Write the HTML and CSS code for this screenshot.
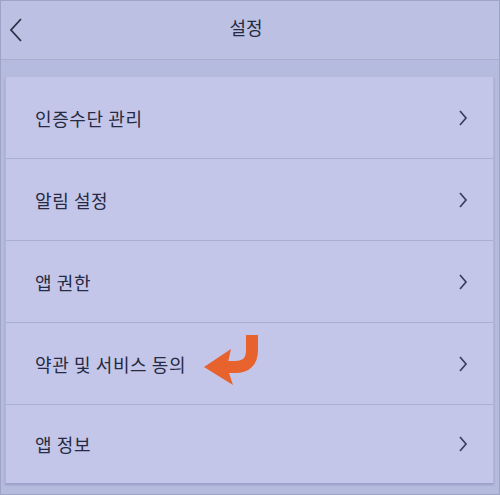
FILE: index.html
```html
<!DOCTYPE html>
<html>
<head>
<meta name='viewport' content='width=device-width,initial-scale=1.0'/>
<title>설정</title>
<link rel="stylesheet" href="styles.css">
</head>
<body>

<section class="screen">

    <header class="topbar">
        <svg class="back" width="14" height="26" viewBox="0 0 14 26">
            <path d="M12 2 L2 13 L12 24" fill="none" stroke="#2c3048" stroke-width="1.8"/>
        </svg>
        <h1 class="title">설정</h1>
    </header>

    <div class="band">
        <nav class="card">
            <div class="row">
                <span class="label">인증수단 관리</span>
                <svg class="chev" width="10" height="18" viewBox="0 0 10 18"><path d="M2 2 L8 9 L2 16" fill="none" stroke="#3a3e5c" stroke-width="1.7"/></svg>
            </div>
            <div class="row">
                <span class="label">알림 설정</span>
                <svg class="chev" width="10" height="18" viewBox="0 0 10 18"><path d="M2 2 L8 9 L2 16" fill="none" stroke="#3a3e5c" stroke-width="1.7"/></svg>
            </div>
            <div class="row">
                <span class="label">앱 권한</span>
                <svg class="chev" width="10" height="18" viewBox="0 0 10 18"><path d="M2 2 L8 9 L2 16" fill="none" stroke="#3a3e5c" stroke-width="1.7"/></svg>
            </div>
            <div class="row">
                <span class="label">약관 및 서비스 동의</span>
                <svg class="pointer" width="60" height="52" viewBox="0 0 60 52">
                    <path d="M50 2 L50 17 Q50 34 33 34 L22 34" fill="none" stroke="#e8622e" stroke-width="12"/>
                    <polygon points="2,34 29,16 25,34 31,52" fill="#e8622e"/>
                </svg>
                <svg class="chev" width="10" height="18" viewBox="0 0 10 18"><path d="M2 2 L8 9 L2 16" fill="none" stroke="#3a3e5c" stroke-width="1.7"/></svg>
            </div>
            <div class="row last">
                <span class="label">앱 정보</span>
                <svg class="chev" width="10" height="18" viewBox="0 0 10 18"><path d="M2 2 L8 9 L2 16" fill="none" stroke="#3a3e5c" stroke-width="1.7"/></svg>
            </div>
        </nav>
    </div>

</section>

</body>
</html>
```

FILE: styles.css
```css
* {
    box-sizing: border-box;
}

html, body {
    margin: 0;
    padding: 0;
}

body {
    font-family: "Noto Sans CJK KR", "Noto Sans", sans-serif;
    background: #b3b9dc;
    color: #262a42;
}

/* whole phone capture, thin frame round it */
.screen {
    width: 500px;
    height: 495px;
    border: 1px solid #9ea4c6;
    background: #b5bbde;
    display: flex;
    flex-direction: column;
    overflow: hidden;
}

.topbar {
    height: 59px;
    flex-shrink: 0;
    display: flex;
    align-items: center;
    justify-content: center;
    position: relative;
    background: #bcc1e4;
    border-bottom: 1px solid #a8aed0;
}

.back {
    position: absolute;
    left: 8px;
    top: 16px;
}

.title {
    margin: 0;
    font-size: 18px;
    font-weight: 400;
    line-height: 24px;
    margin-top: -6px;
    margin-left: -8px;
    color: #262a42;
}

.band {
    flex: 1;
    padding: 17px 5px 0 4px;
}

.card {
    display: flex;
    flex-direction: column;
    background: #c3c6e9;
    border-left: 1px solid #b0b6d8;
    border-right: 1px solid #b0b6d8;
    box-shadow: 0 2px 2px rgba(120, 126, 170, 0.45);
}

.row {
    height: 82px;
    display: flex;
    align-items: center;
    justify-content: space-between;
    padding: 0 25px 0 29px;
    border-bottom: 1px solid #a9afd2;
    position: relative;
}

.row.last {
    height: 78px;
    border-bottom: 0;
}

.label {
    font-size: 18px;
    letter-spacing: 0.6px;
    line-height: 24px;
    color: #262a42;
}

.chev {
    flex-shrink: 0;
}

.pointer {
    position: absolute;
    left: 196px;
    top: 10px;
}
```
